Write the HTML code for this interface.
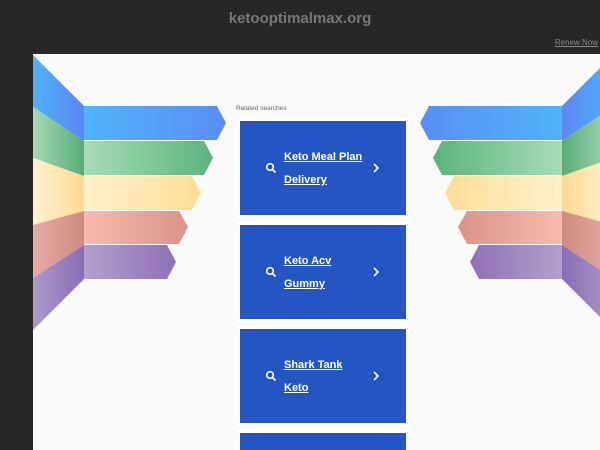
<!DOCTYPE html>
<html><head><meta charset="utf-8"><style>
html,body{margin:0;padding:0;width:600px;height:450px;overflow:hidden;background:#272727;font-family:"Liberation Sans",sans-serif}
#wrap{position:relative;width:600px;height:450px;overflow:hidden}
.title{position:absolute;top:10px;left:0;width:600px;text-align:center;color:#777;font-size:15px;font-weight:bold}
.renew{position:absolute;top:38px;right:2px;color:#888;font-size:8px;text-decoration:underline}
.panel{position:absolute;left:33px;top:54px;width:567px;height:396px;background:#fafafb;overflow:hidden}
.rel{position:absolute;left:236px;top:105px;font-size:6.5px;color:#666}
.card{position:absolute;left:240px;width:166px;height:94px;background:#2456c3;box-shadow:0 0 0 3px #fff}
.card .t{position:absolute;left:44px;top:25px;color:#fff;font-weight:bold;font-size:11px;line-height:23px;text-decoration:underline}
.card svg{position:absolute}
</style></head><body><div id="wrap">
<div class="title">ketooptimalmax.org</div>
<div class="renew">Renew Now</div>
<div class="panel"></div>
<svg width="600" height="450" style="position:absolute;left:0;top:0">
<defs>
<linearGradient id="b" x1="0" x2="1"><stop offset="0" stop-color="#50b4f8"/><stop offset="1" stop-color="#5a8ef5"/></linearGradient>
<linearGradient id="g" x1="0" x2="1"><stop offset="0" stop-color="#a8dcb8"/><stop offset="1" stop-color="#5cb47c"/></linearGradient>
<linearGradient id="y" x1="0" x2="1"><stop offset="0" stop-color="#fff0cc"/><stop offset="1" stop-color="#ffdd98"/></linearGradient>
<linearGradient id="r" x1="0" x2="1"><stop offset="0" stop-color="#f8baaf"/><stop offset="1" stop-color="#da9488"/></linearGradient>
<linearGradient id="p" x1="0" x2="1"><stop offset="0" stop-color="#b3a0cc"/><stop offset="1" stop-color="#8e70b8"/></linearGradient>
<linearGradient id="bw" x1="0" x2="1"><stop offset="0" stop-color="#4fb2f8"/><stop offset="1" stop-color="#5b87f2"/></linearGradient>
<linearGradient id="gw" x1="0" x2="1"><stop offset="0" stop-color="#a5d9b5"/><stop offset="1" stop-color="#58ad78"/></linearGradient>
<linearGradient id="yw" x1="0" x2="1"><stop offset="0" stop-color="#fff1d0"/><stop offset="1" stop-color="#ffd992"/></linearGradient>
<linearGradient id="rw" x1="0" x2="1"><stop offset="0" stop-color="#e6aca2"/><stop offset="1" stop-color="#cf8a80"/></linearGradient>
<linearGradient id="pw" x1="0" x2="1"><stop offset="0" stop-color="#ad9ac8"/><stop offset="1" stop-color="#8a6cb6"/></linearGradient>
</defs>
<g>
<polygon points="33,55 84,106 84,141 33,107" fill="url(#bw)"/>
<polygon points="33,107 84,141 84,176 33,158" fill="url(#gw)"/>
<polygon points="33,158 84,176 84,211 33,225" fill="url(#yw)"/>
<polygon points="33,225 84,211 84,245 33,278" fill="url(#rw)"/>
<polygon points="33,278 84,245 84,279 33,330" fill="url(#pw)"/>
<polygon points="84,106 217,106 226,123 217,140 84,140" fill="url(#b)"/>
<polygon points="84,141 204,141 213,158 204,175 84,175" fill="url(#g)"/>
<polygon points="84,176 192,176 201,193 192,210 84,210" fill="url(#y)"/>
<polygon points="84,211 179,211 188,227 179,244 84,244" fill="url(#r)"/>
<polygon points="84,245 167,245 176,262 167,279 84,279" fill="url(#p)"/>
</g>
<g transform="translate(646,0) scale(-1,1)">
<polygon points="33,55 84,106 84,141 33,107" fill="url(#bw)"/>
<polygon points="33,107 84,141 84,176 33,158" fill="url(#gw)"/>
<polygon points="33,158 84,176 84,211 33,225" fill="url(#yw)"/>
<polygon points="33,225 84,211 84,245 33,278" fill="url(#rw)"/>
<polygon points="33,278 84,245 84,279 33,330" fill="url(#pw)"/>
<polygon points="84,106 217,106 226,123 217,140 84,140" fill="url(#b)"/>
<polygon points="84,141 204,141 213,158 204,175 84,175" fill="url(#g)"/>
<polygon points="84,176 192,176 201,193 192,210 84,210" fill="url(#y)"/>
<polygon points="84,211 179,211 188,227 179,244 84,244" fill="url(#r)"/>
<polygon points="84,245 167,245 176,262 167,279 84,279" fill="url(#p)"/>
</g>
</svg>
<div class="rel">Related searches</div>
<div class="card" style="top:121px"><svg width="12" height="12" style="left:25px;top:41px" viewBox="0 0 12 12"><circle cx="5" cy="5" r="3.3" stroke="#fff" stroke-width="1.6" fill="none"/><line x1="7.5" y1="7.5" x2="10.5" y2="10.5" stroke="#fff" stroke-width="1.8"/></svg><div class="t">Keto Meal Plan<br>Delivery</div><svg width="8" height="12" style="left:132px;top:41px" viewBox="0 0 8 12"><path d="M2 2 L6 6 L2 10" stroke="#fff" stroke-width="1.6" fill="none"/></svg></div>
<div class="card" style="top:225px"><svg width="12" height="12" style="left:25px;top:41px" viewBox="0 0 12 12"><circle cx="5" cy="5" r="3.3" stroke="#fff" stroke-width="1.6" fill="none"/><line x1="7.5" y1="7.5" x2="10.5" y2="10.5" stroke="#fff" stroke-width="1.8"/></svg><div class="t">Keto Acv<br>Gummy</div><svg width="8" height="12" style="left:132px;top:41px" viewBox="0 0 8 12"><path d="M2 2 L6 6 L2 10" stroke="#fff" stroke-width="1.6" fill="none"/></svg></div>
<div class="card" style="top:329px"><svg width="12" height="12" style="left:25px;top:41px" viewBox="0 0 12 12"><circle cx="5" cy="5" r="3.3" stroke="#fff" stroke-width="1.6" fill="none"/><line x1="7.5" y1="7.5" x2="10.5" y2="10.5" stroke="#fff" stroke-width="1.8"/></svg><div class="t">Shark Tank<br>Keto</div><svg width="8" height="12" style="left:132px;top:41px" viewBox="0 0 8 12"><path d="M2 2 L6 6 L2 10" stroke="#fff" stroke-width="1.6" fill="none"/></svg></div>
<div class="card" style="top:433px;height:17px"></div>
</div></body></html>
